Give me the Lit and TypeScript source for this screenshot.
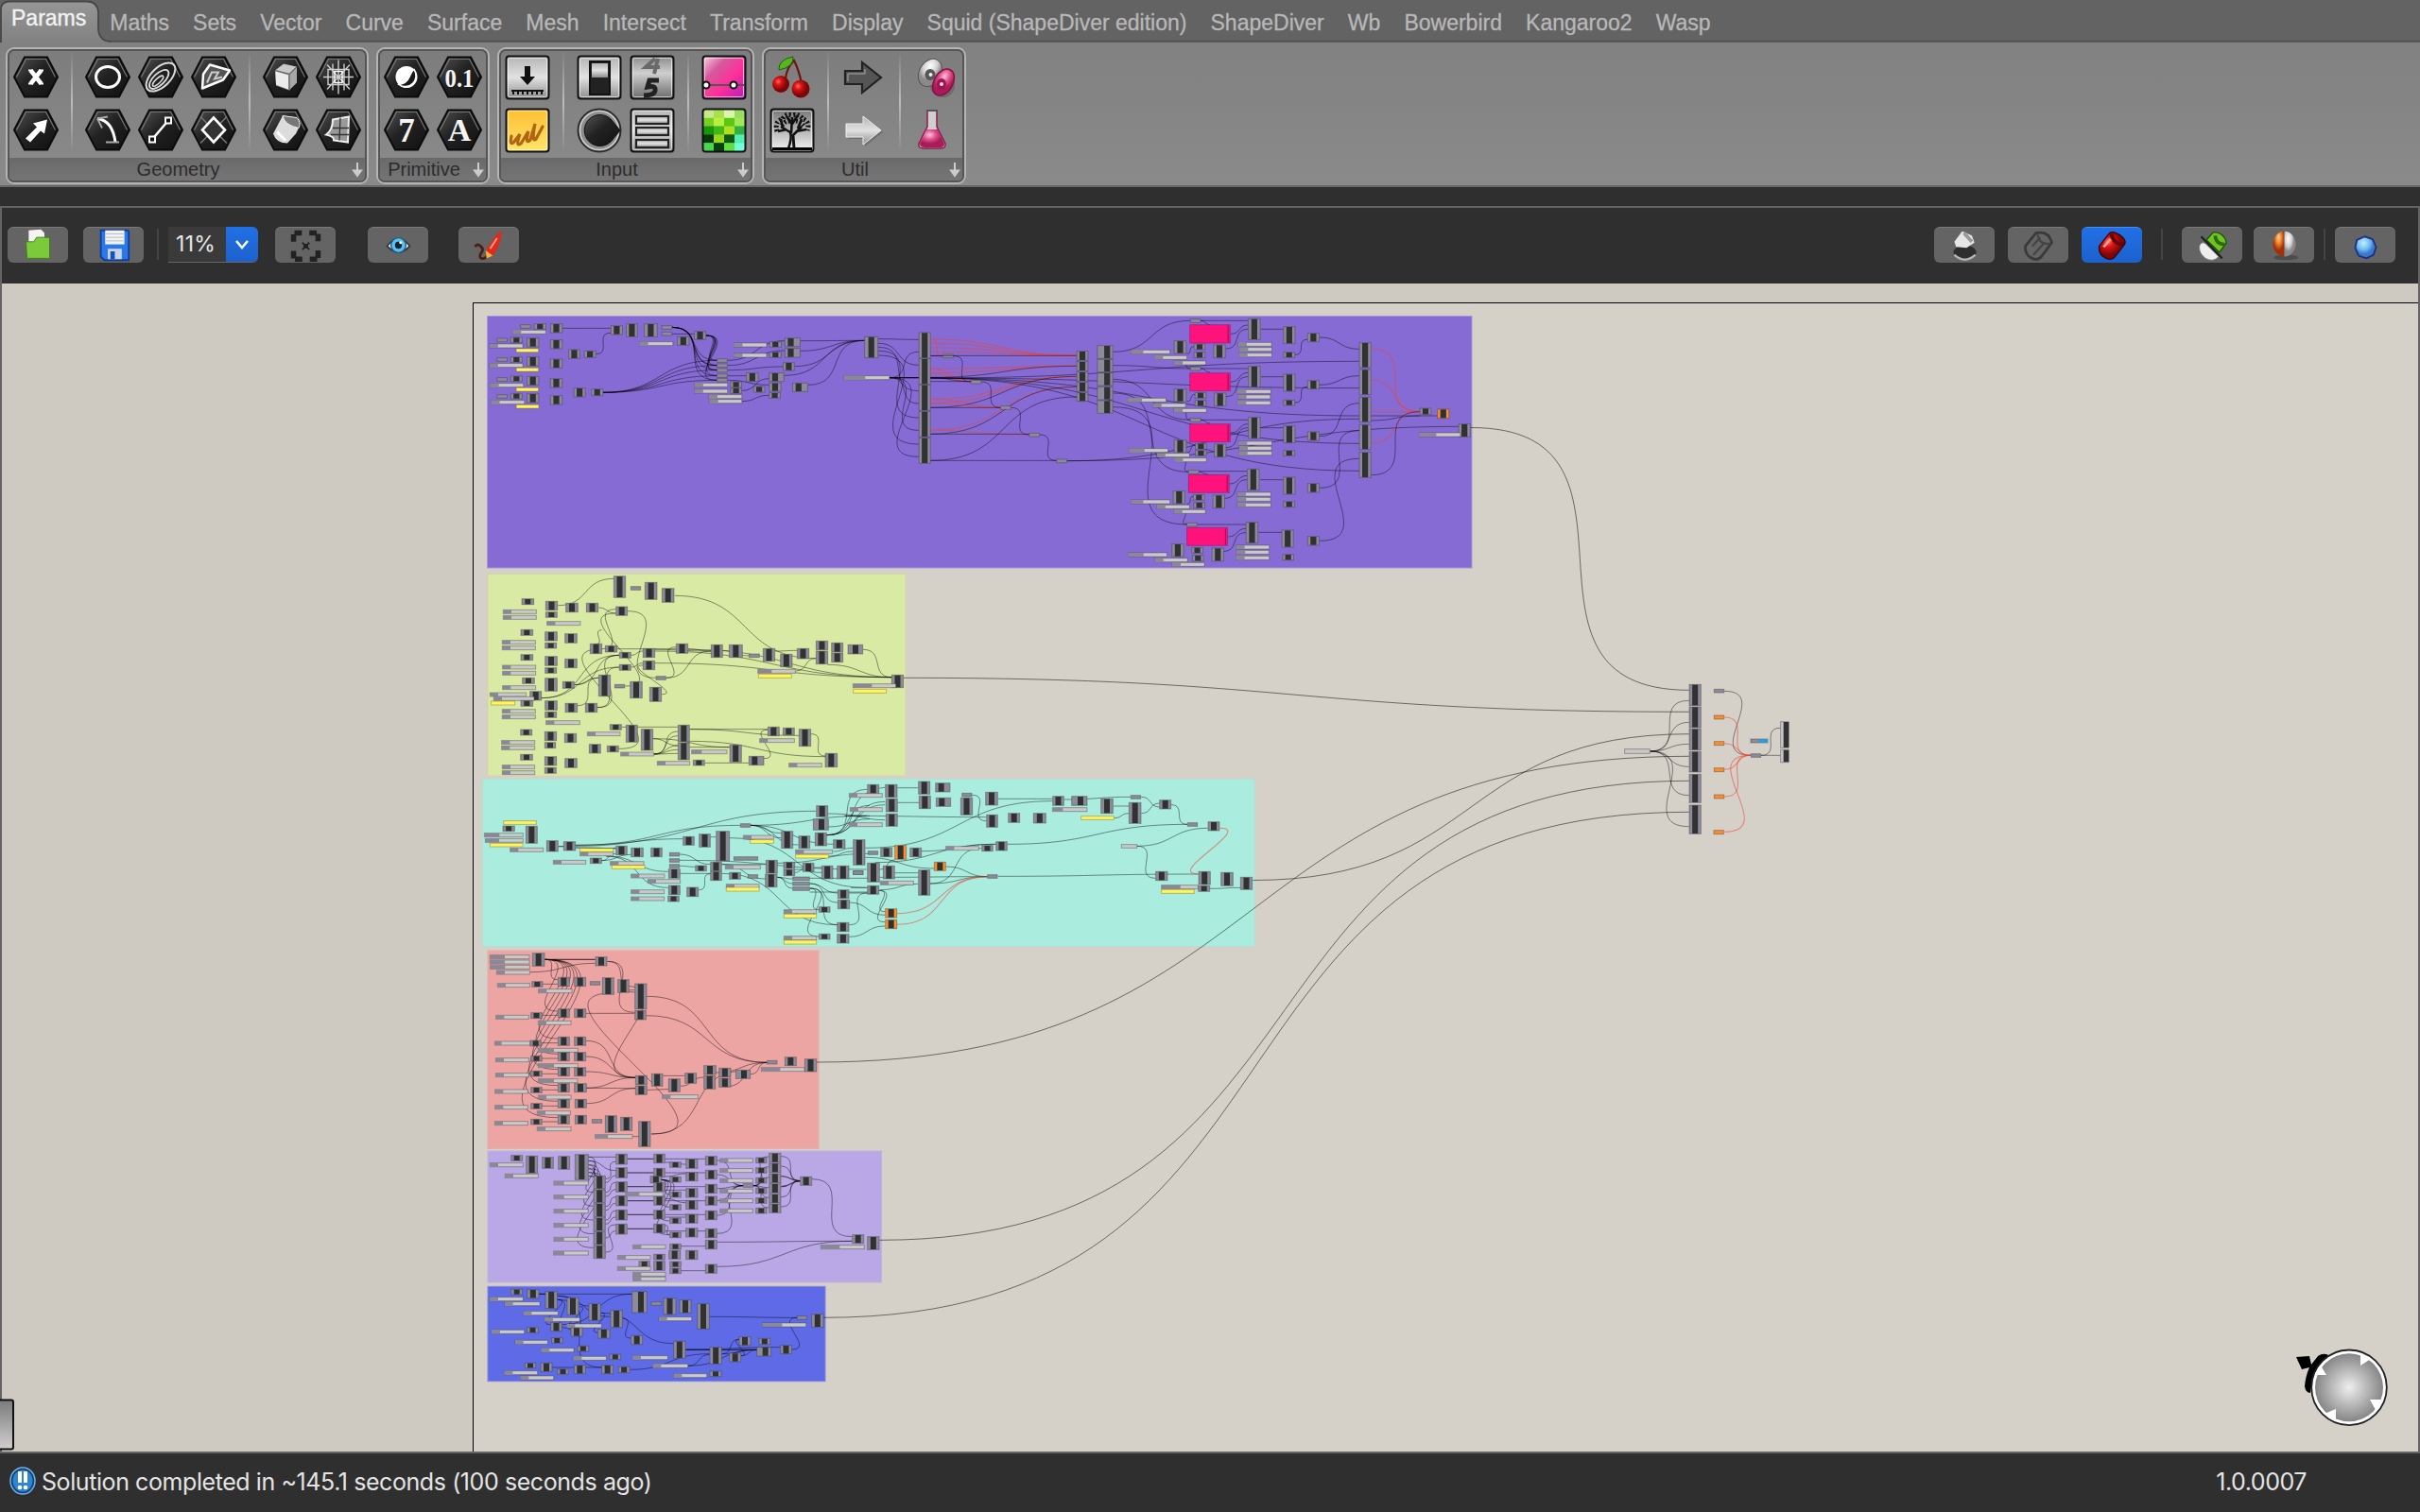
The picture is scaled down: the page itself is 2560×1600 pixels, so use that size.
import { LitElement, html, svg, css } from "lit";
import { customElement, property } from "lit/decorators.js";

/* ---------- canvas model ----------
   Node rows, in the local units of their frame:
   B x y w h [core]  component, core = offset of the dark label strip
   O x y w h         component with a warning (orange)
   P x y [w h]       floating parameter
   Q x y [w h]       orange parameter
   S x y [w head]    number slider
   Y x y w h         panel
   K x y w h         cluster
   T x y w h         boolean toggle
   L x y w h         plain light box
   W x1 y1 x2 y2     wire,  R = red wire, H = heavy wire */
interface Frame { ox: number; oy: number; sx: number; sy: number; rows: string; }

const u = 1 / 3;
const v = 1 / 2.9037;

const frames: Frame[] = [
  { ox: 500, oy: 320, sx: v, sy: u, rows: `
W 276 82 424 82;W 378 164 424 97;W 612 100 680 100;W 612 79 750 184;H 612 79 750 200;W 612 79 750 215;W 612 79 750 233;W 612 79 750 247
W 717 105 750 184;W 717 105 750 200;H 717 105 750 215;W 717 105 750 232;W 717 105 750 247
W 400 286 750 184;W 400 286 750 200;W 400 286 750 215;W 400 286 750 233;W 400 286 750 247
W 783 184 958 122;W 783 200 958 153;W 783 215 953 204;W 783 233 840 233;W 783 247 910 262;W 827 280 910 242;W 827 314 910 295
W 1006 122 1203 121;W 1006 154 1203 121;W 989 203 1203 121;W 957 232 1203 121;W 1030 262 1203 121
W 1246 116 1370 118;W 1246 130 1370 199;W 1246 142 1370 281;W 1246 154 1370 366;W 1246 168 1370 450
H 1281 239 1407 239;W 1281 239 1370 157;H 1281 239 1370 239;W 1281 239 1370 321;W 1281 239 1370 406;W 1281 239 1370 490
R 1407 117 1444 170;W 1407 170 1444 170;W 1477 170 1530 252
P 146 70;B 188 67 38 19;S 122 87 104;B 238 67 38 30
P 74 113;B 116 110 37 19;S 51 131 104;B 166 112 38 30;Y 133 146 70 13;B 238 118 38 30
P 74 175;B 116 172 37 19;S 51 193 104;B 166 172 38 31;Y 133 207 70 13;B 238 179 38 30
P 74 238;B 116 233 37 19;S 53 256 104;B 166 234 38 30;Y 133 270 70 13;B 238 241 38 30
P 74 292;B 116 288 37 19;S 56 310 104;B 166 289 38 30;Y 133 324 71 13;B 238 295 38 30
B 294 149 36 30;B 342 153 37 23;B 424 73 37 30;B 471 67 36 43;B 526 67 42 43;P 580 73;P 580 93;S 512 124 104;B 628 108 38 29;B 680 91 37 28
B 310 271 37 30;B 364 274 37 23
P 750 178;P 750 194;P 750 209;P 750 226;P 750 240
S 681 255 103;B 791 251 36 20;S 681 275 103;B 791 271 36 19;B 862 266 36 20;S 725 292 103;S 727 307 101
S 802 128 102;S 802 161 102;B 911 124 38 19;B 911 157 38 19;B 958 112 49 29 10;B 958 145 49 30 10;B 953 190 36 27;B 840 223 38 29
B 910 223 47 29 10;B 910 255 38 28;B 910 286 36 19;B 982 255 48 29 10
S 1140 232 141 65;B 1203 108 43 69;B 1370 95 37 83;B 1370 178 37 83;B 1370 261 37 83;B 1370 345 37 83;B 1370 429 37 83;P 1444 164` },

  { ox: 1030, oy: 320, sx: v, sy: u, rows: `
R -132 117 316 169;R -132 130 316 169;R -132 143 316 169;R -132 157 316 169;W -132 169 316 169
R -132 211 316 202;R -132 211 -9 252;R -132 225 316 202;R -132 225 -9 252;W -132 238 316 202;W -132 251 -9 251
R -132 307 316 235;R -132 307 82 334;R -132 320 316 235;W -132 334 316 235;R -132 320 82 334;W -132 334 82 334
R -132 406 316 268;R -132 406 170 420;W -132 418 316 268;W -132 418 170 418;W -132 502 316 300;W -132 502 254 502
W -132 239 -9 251;W 24 252 82 334;W 115 334 170 420;W 203 420 254 502
W -132 240 1184 187;W -132 240 1184 272;W -132 240 1184 360;W -132 240 1184 448;W -132 240 1184 535
W 287 503 1184 370;W 287 503 1490 394
W 428 157 665 58;W 428 200 665 210;W 428 244 665 373;W 428 288 660 538;W 428 332 655 705
W 697 58 843 58;W 697 58 727 71;W 697 210 843 210;W 697 210 727 222;W 697 373 843 373;W 697 373 727 384;W 692 536 840 536;W 692 538 722 547;W 687 705 836 705
W 790 100 843 72;W 774 147 843 85;W 790 252 843 223;W 774 299 843 236;W 790 414 843 386;W 774 461 843 398;W 786 576 840 550;W 770 622 840 563;W 782 744 836 718;W 767 790 836 731
W 882 85 951 85;W 882 236 951 236;W 882 398 951 398;W 880 563 951 563;W 875 730 946 730
W 987 166 1025 118;W 987 318 1025 268
W 655 163 676 140;W 655 315 680 292;W 655 476 680 453;W 655 640 676 615
W 640 191 665 210;W 640 341 665 373;W 640 499 660 538;W 640 663 655 705
W 1062 111 1184 148;W 1062 262 1184 233;W 1062 425 1184 320;W 1062 589 1184 407;W 1062 757 1184 496
W 1220 375 1370 360;W 1220 360 1424 360
R 1220 148 1370 347;R 1220 247 1370 347;R 1220 347 1370 347;R 1220 447 1370 347;W 1220 548 1370 347
P -9 246;P 82 328;P 170 414;P 254 497
B 316 154 36 31;B 316 187 36 31;B 316 220 36 31;B 316 253 36 31;B 316 286 36 29
B 379 136 49 43 22;B 379 180 49 42 22;B 379 223 49 42 22;B 379 267 49 43 22;B 379 311 49 42 22
P 665 52;K 663 70 126 60;B 615 121 39 42;B 676 131 36 20;B 676 157 36 20;B 736 134 38 43;S 483 150 121 37;S 555 168 101;S 615 185 99;B 843 51 38 68;S 812 126 104;S 816 142 101;S 814 160 103;B 951 76 37 56;B 951 157 36 19;B 1025 97 37 29
P 665 204;K 663 223 126 59;B 615 274 39 42;B 679 285 36 20;B 679 310 36 20;B 738 287 38 43;S 471 303 121 45;S 550 320 102;S 615 336 101;B 843 202 38 68;S 810 276 104;S 811 293 101;S 810 312 103;B 951 227 37 56;B 951 309 36 19;B 1025 247 37 29
P 665 367;K 663 385 126 59;B 615 436 39 42;B 680 447 36 20;B 680 469 36 19;B 738 449 38 43;S 477 463 121 47;S 562 478 102;S 616 493 100;B 843 364 38 69;S 813 440 104;S 815 456 101;S 814 472 103;B 951 391 37 56;B 951 469 36 19;B 1025 410 37 29
P 659 532;K 659 546 127 59;B 612 598 38 42;B 674 609 36 20;B 675 634 36 20;B 734 611 38 43;S 483 626 121 37;S 562 642 102;S 614 657 99;B 840 528 38 69;S 809 602 105;S 810 618 103;S 809 636 105;B 951 554 37 56;B 951 631 36 20;B 1025 574 37 30
P 654 699;K 654 714 127 59;B 608 766 38 42;B 669 777 36 20;B 671 802 36 20;B 731 779 38 43;S 474 794 121 47;S 556 811 102;S 609 825 101;B 836 697 38 68;S 805 770 104;S 807 786 101;S 805 804 104;B 946 722 37 56;B 948 799 36 20;B 1025 742 37 30
B 1184 127 37 81;B 1184 212 37 82;B 1184 300 37 81;B 1184 387 37 81;B 1184 475 37 82
B 1370 335 36 22;O 1424 338 37 31;B 1489 385 37 43;S 1368 413 128 52` },

  { ox: 500, oy: 600, sx: u, sy: u, rows: `
W 271 122 447 37;W 399 129 454 147;W 641 91 1090 290;W 492 140 581 352;W 410 260 454 134;W 483 378 454 147;W 390 245 410 200
W 323 374 465 280;W 218 416 465 280;W 218 416 465 318;W 323 374 399 352;W 333 440 399 352
W 395 446 465 318;W 395 446 465 280;W 458 260 645 260;W 503 280 540 267;W 503 318 540 305
W 579 262 756 267;W 684 260 756 267;W 793 265 878 282;W 614 352 645 254;W 614 352 756 267;W 601 404 540 312
W 579 267 1330 350;W 579 305 1330 350;W 684 262 1330 350;W 960 267 1030 265;W 1025 330 1090 290;W 1127 310 1330 350;W 1239 262 1330 350
W 464 577 410 260;W 474 508 652 508;W 573 545 652 567;W 573 545 815 572;W 575 594 652 567;W 575 594 652 522;W 575 594 652 536;W 575 594 652 580;W 575 594 652 592
W 689 515 936 515;W 689 515 1035 535;W 689 553 1120 602;W 689 572 815 572;W 737 622 876 622;W 924 608 936 517;W 1074 530 1120 600
B 447 28 39 70;P 501 61;B 546 48 40 56;B 600 67 40 46
B 155 100 40 20;B 231 108 39 30;B 231 142 38 19;B 295 114 40 30;B 360 114 39 30;B 454 125 38 30;S 96 135 107;S 96 153 107;S 235 172 108
B 152 198 40 20;B 229 205 40 30;B 229 240 38 19;B 292 211 40 31;S 93 232 107;S 93 250 107
B 152 277 40 20;B 229 283 40 31;B 229 319 38 19;B 292 291 40 30;S 94 311 107;S 94 330 107
B 157 351 40 20;B 229 352 40 43;B 285 363 38 23;S 94 376 107;B 181 394 38 30;S 54 398 117;S 66 411 130;Y 58 425 77 14;B 152 423 40 20
B 229 424 40 31;B 229 459 38 20;B 293 432 40 30;B 357 432 39 30;S 93 451 107;S 93 469 107;S 232 487 109
B 151 515 38 20;B 228 522 39 30;B 228 556 36 20;B 291 528 39 30;S 91 550 107;S 91 567 107
B 151 594 40 20;B 228 601 39 30;B 228 636 38 20;B 292 607 40 31;S 93 628 105;S 93 646 105
B 372 243 39 33;B 420 249 39 22;B 465 270 38 20;B 465 309 38 20;B 540 258 39 30;B 540 297 39 30;B 645 243 39 32;B 399 342 39 69;P 450 372;P 581 346;B 499 363 40 54;B 561 381 39 47
B 756 246 38 42;B 813 246 44 42;P 876 275 35 13;B 921 258 39 42;B 976 276 39 42;B 1029 258 39 34;B 1089 234 39 30;B 1089 266 39 43;B 1138 240 38 31;B 1138 272 38 31;B 1190 246 49 31 16
S 904 324 121 44;Y 906 339 107 14;B 1329 342 39 42;S 1206 370 138 60;Y 1207 387 107 14
B 435 499 38 19;B 486 501 38 56;B 534 514 39 69;S 363 523 106;B 369 562 38 30;B 426 567 38 21;S 469 587 106
B 651 501 38 55;B 651 557 38 56;S 694 580 114 32;S 585 616 105;B 699 612 38 19;B 815 564 39 56;B 876 600 49 30 10;B 936 507 38 30;B 984 510 38 24;S 910 544 112;B 1035 514 39 56;B 1118 591 40 45;S 1003 622 106` },

  { ox: 500, oy: 820, sx: u, sy: u, rows: `
H 272 227 289 227;W 326 223 849 160;W 326 223 1090 115;W 326 226 667 203;H 326 231 454 233;W 409 272 454 250;W 409 272 503 253
W 423 258 620 307;W 423 258 620 358;W 657 252 755 284;W 657 271 1250 300;W 657 313 755 313;W 718 365 755 314;W 815 200 1250 358;W 657 289 706 292
W 755 197 772 197;W 790 313 1157 476;W 790 284 930 284;W 790 284 930 330
W 882 160 979 200;W 882 160 1034 222;W 882 160 1145 220;W 882 160 1250 130;W 882 160 979 185
W 1124 191 1252 46;W 1124 191 1260 97;W 1124 191 1290 50
W 1128 123 1260 130;W 1128 165 1260 140
W 967 325 1015 330;W 967 325 1015 345;W 967 325 1015 360;W 967 280 1260 250;W 1070 328 1260 328;W 1070 345 1158 375;W 1070 345 1158 405;W 1070 360 1100 428;W 1070 360 1158 476;W 1070 360 1100 513
W 1070 372 1260 372;W 1195 375 1260 375;W 1195 476 1252 375;W 1195 405 1308 445;W 1195 514 1308 480;W 1022 310 1060 294;W 1084 294 1107 294;W 1022 300 1107 310
W 1144 243 1207 232;W 1130 258 1207 243
Y 97 145 106 13;B 95 161 39 19;B 168 162 38 56;S 36 184 125 48;S 39 201 122 44;Y 54 216 106 13;S 118 231 107;B 234 208 38 36;B 288 211 39 30
S 255 270 105;S 340 244 107;Y 340 232 107 13;B 372 263 38 19;B 454 225 37 30;B 502 231 40 30;B 565 231 37 30;S 436 274 108;Y 441 286 106 13
P 624 246;P 624 265;P 624 283;B 621 298 38 31;S 502 314 108;S 555 331 105;B 621 350 38 31;S 502 364 107;S 502 386 107;B 619 384 37 19;B 679 356 38 31
B 667 195 37 29;B 718 187 37 43;B 772 178 44 96;B 706 287 37 19;B 754 276 37 30;B 754 306 37 30;P 849 154;S 858 191 98;Y 880 205 76 13;P 828 259 78 13;S 801 286 113;B 814 309 37 23;P 873 316;S 804 346 106;Y 804 356 106 14
B 979 178 38 56;B 1034 193 37 41;B 1086 183 38 43;B 1144 205 39 29;B 1090 97 38 37;B 1080 139 50 37 18;S 1024 237 119;Y 1024 252 106 13
B 930 270 38 43;B 928 314 39 43;B 986 276 37 22;B 986 299 37 22;B 1047 279 37 29;B 1107 288 37 43;B 1156 288 39 43;P 1207 304;P 1015 323 55 13;P 1015 339 55 13;P 1015 355 55 13
B 1158 364 37 29;B 1158 396 39 30;B 1098 418 37 19;S 987 427 105;Y 987 441 105 14;B 1156 468 39 30;B 1098 504 37 19;B 1156 505 39 30;S 987 511 105;Y 987 524 105 14` },

  { ox: 900, oy: 820, sx: u, sy: u, rows: `
W 90 42 109 40;W 148 41 214 41;W 148 88 216 88;W -20 130 430 134;W -76 191 109 85;W -76 191 109 95;W -20 130 109 143;W 385 64 430 146;W 467 76 640 76
W 46 232 640 83;W 224 242 460 220;W 77 278 460 220;W 252 345 415 233;W 498 220 1068 157;W 46 262 264 297;W 92 300 140 270
W 678 78 888 70;W 834 99 882 99;W 836 137 882 122;W 922 70 980 102;W 922 122 980 90;W 1017 95 1068 157;W 908 226 1133 169;W 908 226 968 328
W 92 325 433 323;W 140 311 214 311;W 92 365 214 346;W 252 345 433 323;W 302 291 433 323;W 467 322 1103 315;W 1140 361 1237 358
R 1172 169 1103 314;R 147 440 433 323;R 147 475 433 323;W 90 367 109 434;W 90 367 109 467;W 0 358 52 358
B 52 30 38 30;B 109 30 39 42;B 111 75 38 43;B 111 123 38 41;S -6 58 107;S -3 103 104;S -6 151 107;B 214 20 38 42;B 216 66 38 42;B 268 25 48 30 10;B 270 72 48 29 10
P 352 57;B 348 72 39 56;B 427 54 40 43;B 430 126 37 41;B 499 121 38 31;B 579 121 41 33;B 640 67 37 31;B 700 67 51 31 20;S 639 103 112 33;Y 730 130 106 13;B 793 75 40 48;B 882 87 40 68;P 888 64;B 979 79 38 30;P 1068 151;B 1133 148 38 30
B 7 205 39 82;P 54 241;B 94 231 38 30;O 139 223 38 46;B 187 231 38 30;S 301 226 106;B 415 223 37 20;B 460 211 37 30;O 264 276 38 29;B 52 279 40 62;B 102 288 38 43;S 93 336 107;B 52 351 38 29;B 214 301 38 82;P 433 316;P 7 304;O 109 424 38 30;O 109 459 38 30
L 858 220 51 13;B 967 306 39 30;B 1103 306 39 43;S 985 349 118 60;B 1102 351 38 20;Y 985 363 106 14;B 1174 309 40 44;B 1236 324 39 41` },

  { ox: 500, oy: 1000, sx: u, sy: u, rows: `
H 230 46 389 46;W 183 86 389 58;W 230 46 270 110;W 230 46 270 210;W 230 46 270 297;W 230 46 270 346;W 230 46 270 395;W 230 46 270 446;W 230 46 270 496;W 230 46 270 548
W 223 124 270 124;W 223 223 270 223;W 218 311 270 311;W 221 360 270 360;W 221 409 270 409;W 221 460 270 460;W 221 511 270 511;W 221 561 270 561
W 428 52 514 214;W 428 52 514 150;W 497 143 514 143;W 360 217 514 217;W 480 130 516 421;W 567 600 450 152
W 360 304 516 421;W 360 354 516 421;W 360 402 516 421;W 360 454 516 421;W 360 454 516 455;W 362 503 516 455;W 508 608 527 608
W 553 163 934 373;W 551 224 934 373;W 567 600 860 400;W 555 460 621 458;W 604 415 673 415;W 659 448 733 420;W 771 405 934 373;W 800 450 934 373;W 882 410 934 373
S 54 31 127 47;S 54 47 127 47;S 55 63 127 47;S 75 80 107;B 189 25 40 43;B 389 37 38 30
S 78 121 104;B 187 115 36 19;B 270 102 38 30;B 322 102 38 30;S 208 139 108;P 372 115;B 411 103 38 55;B 460 109 37 43;B 514 122 39 82;B 514 207 37 31
S 73 222 106;B 184 214 37 20;B 270 202 38 29;B 322 202 38 29;S 207 240 106
S 69 305 114 22;B 182 302 36 20;B 270 291 38 29;B 322 291 38 29;S 207 327 128 50
S 72 358 107;B 184 351 37 19;B 270 340 38 29;B 322 340 38 29;S 207 376 128 50
S 72 406 107;B 184 399 37 19;B 270 388 38 29;B 322 388 38 29;S 207 424 127 50
S 70 458 106;B 184 451 37 19;B 270 439 38 29;B 322 439 40 29;S 207 476 106
S 70 508 106;B 184 502 37 19;B 270 489 38 29;B 324 489 38 29;S 204 526 107
S 69 559 107;B 184 552 37 19;B 270 540 38 29;B 324 540 38 29;S 204 577 109
P 378 553;B 420 541 38 55;B 469 546 38 44;S 388 601 120 40;B 526 559 39 82
B 516 414 38 30;B 516 446 38 30;B 567 408 37 41;B 621 424 38 43;S 601 475 115;B 673 406 38 34;B 733 382 40 30;B 733 414 38 44;B 781 390 39 30;B 781 422 39 30;B 834 396 48 29 18
P 934 366;B 990 355 38 29;S 915 388 139 60;B 1053 361 39 42` },

  { ox: 500, oy: 1210, sx: u, sy: u, rows: `
W 368 43 454 43;W 368 55 454 86;W 368 68 405 110;W 368 80 405 110;W 368 92 405 110;W 368 104 405 110;W 368 43 405 105
W 368 55 383 155;W 368 68 383 199;W 368 80 383 243;W 368 92 383 287;W 368 104 383 331
W 421 112 454 58;W 421 124 454 102;W 421 168 454 146;W 421 212 454 190;W 421 256 454 234;W 421 300 454 278;W 421 345 454 258;W 421 155 454 124;W 421 200 454 170;W 421 243 454 214
H 491 49 574 49;H 491 93 574 93;H 491 137 574 137;H 491 182 574 182;H 491 226 574 226;H 491 271 574 271
W 611 49 738 49;W 611 93 738 93;W 611 137 738 137;W 611 182 738 182;W 611 226 738 226;W 611 278 738 278;W 611 60 676 66;W 611 105 676 96;W 611 148 676 148;W 611 175 676 188;W 611 234 676 234;W 611 260 625 290
W 598 115 625 162;W 598 115 625 202;W 598 115 625 246;W 598 115 625 290;H 598 115 625 120
W 776 54 858 134;W 776 99 858 134;W 776 143 858 134;W 776 182 858 134;W 776 228 858 134;W 776 286 858 134
W 890 134 940 42;W 890 134 940 74;W 890 134 940 108;W 890 134 940 140;W 890 134 940 172;W 890 134 940 204
W 979 41 1039 119;W 979 72 1039 119;H 979 104 1039 119;H 979 137 1039 119;W 979 170 1039 119;W 979 201 1039 119
W 1076 113 1204 296;W 776 313 1204 310;W 776 391 1204 310;W 662 326 738 326;W 662 404 738 404
B 121 37 38 19;S 54 61 107;B 169 39 38 56;S 102 96 107;B 220 43 37 37;B 271 40 38 43;B 324 34 44 82
S 257 119 111 32;S 257 163 111 32;S 257 208 111 32;S 257 253 111 32;S 257 297 111 32;S 256 341 112 34
B 383 102 39 43;B 383 146 39 43;B 383 190 39 44;B 383 235 39 43;B 383 279 39 43;B 383 323 39 43
B 454 33 37 34;B 454 76 37 34;B 454 121 37 34;B 454 165 37 34;B 454 210 37 34;B 454 255 37 34
B 574 33 37 30;B 574 78 37 30;B 563 103 37 23;B 574 123 37 30;B 574 167 37 30;B 574 211 37 30;B 574 255 37 30;S 484 154 121 44
B 625 58 37 19;B 625 105 37 19;B 625 153 37 19;B 625 193 37 19;B 625 236 37 19;B 625 281 37 19
B 676 49 39 31;B 676 91 39 29;B 676 142 39 30;B 676 180 39 30;B 676 224 39 30;B 676 268 39 30
B 738 40 38 30;B 738 84 38 30;B 738 129 38 30;B 738 167 38 30;B 738 213 38 30;B 738 270 38 30;B 738 306 38 30;B 738 383 38 30
S 784 47 106;S 784 79 106;S 784 111 106;S 784 144 106;S 784 175 106;S 784 207 106
B 898 44 36 19;B 898 76 36 19;B 898 108 36 19;B 898 141 36 19;B 898 172 36 19;B 898 204 36 19;P 858 127
B 940 30 39 31;B 940 62 39 31;B 940 95 39 31;B 940 127 39 31;B 940 160 39 30;B 940 191 39 30;B 1039 105 38 29;B 1204 289 38 29;B 1252 295 39 43;S 1104 322 140 60
S 508 321 105;B 625 318 37 19;B 622 339 38 29;B 676 339 39 30;S 459 355 106;B 574 351 37 19;B 527 373 36 19;S 459 390 106;B 574 373 37 31;B 625 374 37 19;B 625 395 37 19;S 508 408 105;S 508 423 105` },

  { ox: 500, oy: 1210, sx: u, sy: u, rows: `
H 211 478 231 478;W 211 478 505 478;W 269 484 369 516;W 269 496 299 586;W 269 496 247 575;W 337 518 313 590;W 269 484 437 550;W 407 538 397 600;W 284 575 505 478;W 407 538 637 635
W 476 556 502 618;W 269 496 411 711;W 253 711 411 711;W 500 718 752 668;W 684 706 902 655;W 684 706 752 670;W 752 550 1030 553;W 676 654 976 647;H 676 655 902 655
W 791 668 846 622;W 791 668 902 655;W 852 674 846 622;W 852 674 902 655;W 1013 654 1030 553
B 121 462 38 19;B 172 463 39 29;S 54 487 107;S 101 502 113;B 230 469 39 56;S 160 532 112;B 299 489 38 56;S 228 552 113;B 368 508 39 55;S 298 572 112;B 247 568 37 29;B 311 584 38 29;B 397 589 39 30;B 437 529 39 56;B 502 609 38 30
S 60 591 105;B 172 583 37 19;S 134 624 105;B 250 616 36 19;S 217 649 105;B 332 642 37 19;S 319 675 106;B 434 668 37 19;B 505 469 49 69 20;P 566 502;B 605 490 41 54;B 656 496 38 43;S 590 550 106;B 712 508 40 82;P 1029 547;B 1075 541 39 43;S 919 569 140 62
S 507 673 113;S 571 699 113;B 637 627 39 56;B 752 646 39 55;B 814 665 38 29;B 845 613 38 29;B 908 618 37 21;B 901 646 47 30 19;B 976 640 37 29;S 637 730 107;B 752 722 38 19
B 165 696 36 18;B 215 696 38 29;S 100 721 107;B 268 715 37 19;S 151 737 107;B 321 703 38 29;B 409 703 38 29;B 462 708 37 21` },

  { ox: 1690, oy: 700, sx: u, sy: u, rows: `
W 167 285 290 124;W 167 285 290 193;W 167 285 290 262;W 167 285 290 334;W 167 285 290 425;W 167 285 290 524
W 402 94 486 298;R 402 177 486 298;R 402 260 486 298;R 402 343 486 298;R 402 429 486 298;R 402 541 486 298;W 519 298 580 211;W 519 298 580 298
L 85 277 82 16;B 290 72 39 69;B 290 143 39 68;B 290 213 39 69;B 290 285 39 67;B 290 357 39 92;B 290 455 39 93
P 369 87;Q 369 170;Q 369 253;Q 369 337;Q 369 422;Q 368 535;T 485 245 56 14;P 486 292
E 580 190 27 85;E 580 279 27 42` },
];

const groups = [
  { x: 515.5, y: 334.5, w: 1041.5, h: 266.5, fill: "#866bd4", edge: "#a797dc" },
  { x: 516, y: 607.5, w: 442, h: 213.5, fill: "#d9eaa5", edge: "#cdd8ae" },
  { x: 510.5, y: 824.5, w: 816.5, h: 177, fill: "#aaecde", edge: "#b2e0d5" },
  { x: 516, y: 1006, w: 350, h: 209.5, fill: "#eda5a4", edge: "#e0aeab" },
  { x: 516, y: 1218, w: 416.5, h: 139, fill: "#baa7e6", edge: "#c0b3dd" },
  { x: 516, y: 1361.3, w: 357, h: 100.4, fill: "#5e6ae6", edge: "#8288de" },
];

const trunks = [
  [1556, 452.5, 1786.7, 730.3],
  [956, 717.3, 1786.7, 753.3],
  [1325.3, 931.5, 1786.7, 776.7],
  [864, 1124, 1786.7, 800.3],
  [930.7, 1312.3, 1786.7, 826.3],
  [871.3, 1394.3, 1786.7, 859.3],
];

/* Handles grow with the steepness of the wire, so that vertical runs bow outwards. */
function curve(x1: number, y1: number, x2: number, y2: number): string {
  const h = Math.hypot(x2 - x1, y2 - y1);
  const steep = Math.pow(Math.abs(y2 - y1) / h, 4);
  const d = h * (0.5 + 0.25 * steep);
  return `M${x1} ${y1}C${x1 + d} ${y1} ${x2 - d} ${y2} ${x2} ${y2}`;
}

function item(row: string) {
  const [kind, ...rest] = row.trim().split(/\s+/);
  const [x, y, a, b, c] = rest.map(Number);
  const box = (w: number, h: number, cls: string) =>
    svg`<rect class=${cls} x=${x + 1} y=${y + 1} width=${w - 2} height=${h - 2}></rect>`;
  switch (kind) {
    case "W": return svg`<path class="wire" d=${curve(x, y, a, b)}></path>`;
    case "H": return svg`<path class="wire heavy" d=${curve(x, y, a, b)}></path>`;
    case "R": return svg`<path class="wire red" d=${curve(x, y, a, b)}></path>`;
    case "B":
    case "O":
      return svg`${box(a, b, kind === "O" ? "warn" : "body")}
        <rect class="core" x=${x + (c || (a - 18) / 2)} y=${y + 2} width="18" height=${b - 4}></rect>`;
    case "E":
      return svg`${box(a, b, "light")}<rect class="core" x=${x + 10} y=${y + 2} width="17" height=${b - 4}></rect>`;
    case "P": return box(a || 33, b || 13, "body");
    case "Q": return box(a || 33, b || 14, "warn");
    case "Y": return box(a, b, "panel");
    case "L": return box(a, b, "light");
    case "T": return svg`${box(a, b, "body")}<rect class="blue" x=${x + 28} y=${y + 1} width=${a - 29} height=${b - 2}></rect>`;
    case "K": return svg`${box(a, b, "cluster")}<rect class="spine" x=${x + a - 9} y=${y + 4} width="3" height=${b - 8}></rect>`;
    default: {
      const w = a || 105;
      return svg`${box(w, 14, "light")}<rect class="head" x=${x + 1} y=${y + 1} width=${b || 26} height="12"></rect>`;
    }
  }
}

/* ---------- icons ---------- */
const hex = (inner: unknown) => svg`
  <polygon points="12,2.500 36,2.500 47,23.500 36,44.500 12,44.500 1,23.500" fill="url(#hexFill)" stroke="#0b0b0b" stroke-width="2"></polygon>
  <polyline points="3.500,23.500 13.500,4.500 34.500,4.500 44.500,23.500" fill="none" stroke="#777" stroke-width="1.200"></polyline><g transform="translate(0 -.5)">${inner}</g>`;
const tile = (fill: string, inner: unknown) => svg`
  <rect x="1.500" y="1.500" width="45" height="45" rx="3" fill=${fill} stroke="#111" stroke-width="2"></rect>
  <rect x="3.500" y="3.500" width="41" height="41" rx="2" fill="none" stroke="#fff" stroke-opacity=".6"></rect>${inner}`;

const icons: Record<string, unknown> = {
  cross: hex(svg`<path d="M18.500 17L29.500 31M29.500 17L18.500 31" stroke="#fff" stroke-width="4.600"></path><path d="M16 17H21M27 17H32M16 31H21M27 31H32" stroke="#fff" stroke-width="2"></path>`),
  vec: hex(svg`<path d="M13 33L25 21L21 17L36 13L33 28L29 25L18 37Z" fill="#fff"></path>`),
  circle: hex(svg`<ellipse cx="24" cy="24" rx="12.500" ry="11" fill="none" stroke="#fff" stroke-width="3"></ellipse>`),
  ellipse: hex(svg`<g fill="none" stroke="#dcdcdc" transform="rotate(-44 24 24)"><ellipse cx="24" cy="24" rx="19" ry="10" stroke-width="2"></ellipse><ellipse cx="21" cy="24.500" rx="13" ry="6" stroke-width="1.800"></ellipse><ellipse cx="19" cy="25" rx="7.500" ry="2.500" stroke-width="1.500"></ellipse></g>`),
  plane: hex(svg`<path d="M20 11L41 17L34 27L12 36L13 21Z" fill="#555" stroke="#fff" stroke-width="2.500" stroke-linejoin="round"></path><path d="M17 30L22 19L29 19L25 26L33 24" fill="none" stroke="#ccc" stroke-width="2"></path>`),
  box: hex(svg`<path d="M13 17L22 10L36 13V30L28 38L14 33Z" fill="#a8a8a8"></path><path d="M13 17L28 21L36 13M28 21V38" stroke="#666" fill="none" stroke-width="1.300"></path><path d="M13.500 18L27 22V37L14 32Z" fill="#ececec"></path><path d="M14 16.500L22 10.500L35 13.300L28 20Z" fill="#c9c9c9"></path>`),
  mesh: hex(svg`<path d="M24 6V42M8 24H40M12 11L36 37M36 11L12 37M13 16H35V32H13ZM18 10V38M30 10V38" fill="none" stroke="#cfcfcf" stroke-width="1.400"></path><path d="M20 18H28V30H20Z" fill="none" stroke="#fff" stroke-width="1.500"></path>`),
  arc: hex(svg`<path d="M13 12Q29 14 32 37" fill="none" stroke="#fff" stroke-width="3"></path><path d="M13 12L18 22M13 12L24 10M22 37H36" stroke="#aaa" stroke-width="1.800"></path>`),
  line: hex(svg`<path d="M15 34L32 14" stroke="#fff" stroke-width="2.500"></path><path d="M12 31H18V37H12ZM29 11H35V17H29Z" fill="#111" stroke="#fff" stroke-width="2"></path>`),
  rect: hex(svg`<path d="M10 10L38 38M38 10L10 38" stroke="#777" stroke-width="1.500"></path><path d="M24 11L36 24L24 37L12 24Z" fill="#333" stroke="#fff" stroke-width="2.600"></path>`),
  brep: hex(svg`<path d="M21 9L36 11Q41 18 35 28L26 38Q14 38 11 28Z" fill="#dcdcdc"></path><path d="M21 9Q23 19 38 22Q41 16 36 11Z" fill="#777" stroke="#eee"></path><path d="M15 26L24 35" stroke="#fff" stroke-width="3"></path>`),
  surf: hex(svg`<path d="M18 13L35 10L34 37L19 35Q20 31 11 29Q18 24 18 13Z" fill="#999" stroke="#eee" stroke-width="2"></path><path d="M26 11L25 35M18 22H35M16 29L35 29" stroke="#333" stroke-width="1.300" fill="none"></path>`),
  bool: hex(svg`<circle cx="24" cy="24" r="11.500" fill="#fff"></circle><path d="M32 16A11.500 11.500 0 0 1 16 32Q24 31 27 24T32 16Z" fill="#181818" stroke="#fff" stroke-width="1.500"></path>`),
  num: hex(svg`<text x="24" y="34" class="gl" font-size="28" textLength="31" lengthAdjust="spacingAndGlyphs">0.1</text>`),
  int: hex(svg`<text x="24" y="36" class="gl" font-size="35">7</text>`),
  txt: hex(svg`<text x="24" y="35" class="gl" font-size="34">A</text>`),
  btn: tile("url(#silver)", svg`<path d="M21 12H27V23H32L24 32L16 23H21Z" fill="#111"></path><path d="M7 38H41M9 37V42M14 37V42M19 37V42M24 37V42M29 37V42M34 37V42M39 37V42" stroke="#111" stroke-width="2"></path>`),
  toggle: tile("url(#silver)", svg`<rect x="14" y="7" width="21" height="35" fill="#222" stroke="#111" stroke-width="2"></rect><rect x="16" y="9" width="17" height="15" fill="url(#silver)"></rect>`),
  scroller: tile("url(#drum)", svg`<path d="M27 4L17 13H32M30 4L26 20" fill="none" stroke="#6a6a6a" stroke-width="4"></path><path d="M31 27H21L19 34Q28 32 27 38Q26 43 15 43" fill="none" stroke="#222" stroke-width="5"></path>`),
  graph: tile("url(#pinkTile)", svg`<path d="M3 32H45" stroke="#555" stroke-width="2"></path><circle cx="5" cy="32" r="3.500" fill="#fff" stroke="#111" stroke-width="2"></circle><circle cx="34" cy="32" r="3.500" fill="#fff" stroke="#111" stroke-width="2"></circle>`),
  panel: tile("url(#gold)", svg`<path d="M7 30Q5 40 9 37L16 28Q11 42 17 38L25 25Q21 40 27 34L32 17Q28 38 33 33L40 20" fill="none" stroke="#b06414" stroke-width="3.200" stroke-linecap="round"></path>`),
  knob: svg`<circle cx="24" cy="24" r="22.500" fill="#8d8d8d" stroke="#2c2c2c" stroke-width="2"></circle><circle cx="24" cy="24" r="20.500" fill="none" stroke="#d0d0d0" stroke-width="1.500"></circle><path d="M46 24L37 13A16.500 16.500 0 1 0 37 35Z" fill="url(#hexFill)" stroke="#111"></path>`,
  list: tile("url(#silver)", svg`<g fill="url(#silver)" stroke="#222" stroke-width="2.200"><rect x="7" y="9" width="34" height="8"></rect><rect x="7" y="21" width="34" height="8"></rect><rect x="7" y="34" width="34" height="8"></rect></g>`),
  swatch: svg`<g>${["#c8e88c", "#a8e050", "#dcf4b0", "#98dc60", "#78d020", "#b8f040", "#58c810", "#a0e858", "#189808", "#40b818", "#b0e020", "#30b040", "#083808", "#98d818", "#105810", "#50f0b0", "#48d850", "#084010", "#60e040", "#70ffd8"].map((f, i) => svg`<rect x=${2 + (i % 4) * 11} y=${2 + Math.floor(i / 4) * 8.8} width="11.200" height="9" fill=${f}></rect>`)}</g><rect x="1.500" y="1.500" width="45" height="45" rx="3" fill="none" stroke="#111" stroke-width="2"></rect>`,
  cherry: svg`<path d="M17 25Q18 14 26 6Q31 16 34 30" fill="none" stroke="#6b1515" stroke-width="2.200"></path><path d="M10 16Q9 5 25 2Q26 13 10 16Z" fill="#54b51e" stroke="#255d0b"></path><circle cx="12" cy="31" r="9" fill="url(#red)"></circle><circle cx="33" cy="36" r="9.500" fill="url(#red)"></circle>`,
  tree: tile("url(#treeBg)", svg`<path d="M20 43Q24 32 22 26L12 20M24 30L34 20M23 27L24 10M28 25L39 23M18 23L9 25M14 21L12 12M30 22L34 12M24 18L18 9M24 17L30 8" fill="none" stroke="#111" stroke-width="2.600"></path><path d="M26 43L25 30" stroke="#111" stroke-width="3"></path><g fill="none" stroke="#111" stroke-width="5" stroke-dasharray="2 2.200"><path d="M8 25Q5 14 14 12Q16 6 24 8Q32 6 35 12Q43 14 40 24"></path><path d="M13 19Q18 12 24 15Q31 12 36 19"></path></g><path d="M3 42H45V45H3Z"></path>`),
  arrowDark: svg`<path d="M4 17H22V8L42 24L22 40V31H4Z" fill="#555" stroke="#222" stroke-width="2.200"></path><path d="M7 28V20H25V15" fill="none" stroke="#aaa"></path>`,
  arrowLight: svg`<path d="M7 19H25V11L44 26L25 41V33H7Z" fill="#555" opacity=".45"></path><path d="M5 17H23V9L42 24L23 39V31H5Z" fill="url(#silver)" stroke="#eee"></path>`,
  pills: svg`<ellipse cx="31" cy="33" rx="13" ry="12" fill="#444" opacity=".35"></ellipse><ellipse cx="18" cy="19" rx="11.500" ry="15.500" fill="url(#pearl)" stroke="#555" transform="rotate(30 18 19)"></ellipse><ellipse cx="18" cy="21" rx="5.500" ry="6" fill="#555"></ellipse><circle cx="18.500" cy="21" r="2" fill="#eee"></circle><ellipse cx="32" cy="29" rx="10" ry="15" fill="url(#rose)" stroke="#8a0f45" stroke-width="1.500" transform="rotate(30 32 29)"></ellipse><ellipse cx="30" cy="31" rx="5" ry="6" fill="#9c1552"></ellipse><circle cx="30" cy="31" r="2" fill="#ffd7e8"></circle>`,
  flask: svg`<path d="M15 3H25V20L34 38Q35 43 29 43H11Q5 43 6 38L15 20Z" fill="#cfcfcf" stroke="#8a1c4c" stroke-width="1.500"></path><path d="M14 23H26L33 38Q33 42 29 42H12Q7 42 7 38Z" fill="url(#rose)"></path><path d="M14 3H26" stroke="#555" stroke-width="2"></path>`,
  folder: svg`<path d="M12 5L26 4L30 8V22H12Z" fill="#f4f4f4"></path><path d="M9 18H18L21 13H36V37H10Z" fill="#7cc93c" stroke="#397f13"></path>`,
  save: svg`<path d="M8 5H38Q40 5 40 7V39H12L8 35Z" fill="#2b78e8" stroke="#0c3f9e" stroke-width="2"></path><path d="M13 5H35V21H13Z" fill="#f0f2f5"></path><path d="M14 9H34M14 13H34M14 17H34" stroke="#bbb"></path><path d="M16 26H32V38H16Z" fill="#c8d4e4"></path><path d="M19 29H24V38H19Z" fill="#1550b8"></path>`,
  fit: svg`<path d="M9 18V8H19M27 8H37V18M37 28V38H27M19 38H9V28" fill="none" stroke="#222" stroke-width="6" stroke-dasharray="8.500 2.500"></path><path d="M19 19L27 27M27 19L19 27" stroke="#222" stroke-width="2"></path><rect x="20.500" y="20.500" width="5" height="5" fill="#222"></rect>`,
  eye: svg`<path d="M10 23Q23 6 36 23Q23 37 10 23Z" fill="#e8eef2" stroke="#333" stroke-width="1.800"></path><circle cx="23" cy="22" r="8.500" fill="#5cc0ee" stroke="#1c5f86" stroke-width="1.500"></circle><circle cx="23" cy="22" r="4" fill="#0b2333"></circle><circle cx="25.500" cy="19" r="1.700" fill="#fff"></circle>`,
  brush: svg`<path d="M7 24Q9 19 13 23Q18 27 13 32Q11 38 17 37Q21 36 22 31" fill="none" stroke="#4c1d12" stroke-width="3"></path><path d="M19 28L29 13Q34 6 37 6Q38 16 29 32L21 37Z" fill="#e02a1c"></path><path d="M19 28L27 34L20 37Z" fill="#f4b93c"></path><path d="M24 26L32 14" stroke="#ff9e90" stroke-width="2"></path>`,
  hideTop: svg`<ellipse cx="23" cy="30" rx="13" ry="8" fill="#2e2e2e"></ellipse><path d="M11 33Q23 44 35 33" fill="none" stroke="#b5b5b5" stroke-width="2.500"></path><path d="M11 18L20 6L31 11L34 19L25 25L13 24Z" fill="#e6e6e6"></path><path d="M22 8L31 18" stroke="#999" stroke-width="4"></path>`,
  wireCan: svg`<path d="M8 23L20 8Q35 5 38 19L27 34Q22 41 14 36Q7 32 8 23Z" fill="none" stroke="#3a3a3a" stroke-width="3"></path><path d="M16 23L25 13M17 33L30 19M22 10Q24 22 36 20" stroke="#444" stroke-width="2.500" fill="none"></path>`,
  redCan: svg`<path d="M8 23L20 8Q25 5 35 13Q39 17 37 21L27 34Q22 41 14 36Q7 32 8 23Z" fill="url(#red)" stroke="#3a0808" stroke-width="1.500"></path><path d="M22 9Q24 21 36 21" fill="none" stroke="#600" stroke-width="4"></path><path d="M13 24L21 15" stroke="#ff9b9b" stroke-width="3"></path>`,
  greenCan: svg`<path d="M8 23Q10 17 15 20L30 35Q24 42 15 37Q7 31 8 23Z" fill="#eee" stroke="#777"></path><path d="M16 16L24 7Q36 7 39 19L31 30Z" fill="#6fc424" stroke="#1e5206" stroke-width="1.500"></path><path d="M26 11Q27 21 37 21" stroke="#2c6a0c" stroke-width="4" fill="none"></path><path d="M10 12L34 37" stroke="#222" stroke-width="2.500"></path>`,
  split: svg`<ellipse cx="25" cy="36" rx="14" ry="3" fill="#333" opacity=".5"></ellipse><path d="M23 6A13 14.500 0 0 0 23 35Z" fill="url(#orange)"></path><path d="M23 6A13 14.500 0 0 1 23 35Z" fill="url(#pearl)"></path>`,
  ball: svg`<path d="M13 16L22 12L31 15L35 24L32 33L24 37L15 34L11 25Z" fill="url(#sky)" stroke="#23307e" stroke-width="2" stroke-linejoin="round"></path>`,
};

@customElement("gh-icon")
class GhIcon extends LitElement {
  @property() name = "";
  @property({ type: Number }) size = 48;
  @property() view = "0 0 48 48";
  static styles = css`
    :host { display: block; flex: none; }
    svg { display: block; }
    .gl { font-family: "Liberation Serif", serif; font-weight: 700; fill: #f4f4f4; text-anchor: middle; }
  `;
  render() {
    return html`<svg width=${this.size} height=${this.size} viewBox=${this.view}>
      <defs>
        <linearGradient id="hexFill" x1="0" y1="0" x2="1" y2="1"><stop offset="0" stop-color="#555"></stop><stop offset=".45" stop-color="#222"></stop><stop offset="1" stop-color="#111"></stop></linearGradient>
        <linearGradient id="silver" x1="0" y1="0" x2="0" y2="1"><stop offset="0" stop-color="#b4b4b4"></stop><stop offset=".5" stop-color="#e2e2e2"></stop><stop offset="1" stop-color="#8c8c8c"></stop></linearGradient>
        <linearGradient id="drum" x1="0" y1="0" x2="0" y2="1"><stop offset="0" stop-color="#8a8a8a"></stop><stop offset=".4" stop-color="#cfcfcf"></stop><stop offset="1" stop-color="#6a6a6a"></stop></linearGradient>
        <radialGradient id="pearl" cx=".35" cy=".3"><stop offset="0" stop-color="#fff"></stop><stop offset=".6" stop-color="#d2d2d2"></stop><stop offset="1" stop-color="#8a8a8a"></stop></radialGradient>
        <linearGradient id="gold" x1="0" y1="0" x2="0" y2="1"><stop offset="0" stop-color="#ffbe32"></stop><stop offset="1" stop-color="#ffe66a"></stop></linearGradient>
        <linearGradient id="treeBg" x1="0" y1="0" x2="0" y2="1"><stop offset="0" stop-color="#777"></stop><stop offset="1" stop-color="#f4f4f4"></stop></linearGradient>
        <linearGradient id="pinkTile" x1="0" y1="0" x2="1" y2="1"><stop offset="0" stop-color="#ffd3e6"></stop><stop offset=".3" stop-color="#d45a9c"></stop><stop offset=".6" stop-color="#ff2f9a"></stop><stop offset="1" stop-color="#b020b8"></stop></linearGradient>
        <radialGradient id="red" cx=".35" cy=".35"><stop offset="0" stop-color="#ff6a60"></stop><stop offset=".4" stop-color="#d81414"></stop><stop offset="1" stop-color="#7c0606"></stop></radialGradient>
        <radialGradient id="rose" cx=".4" cy=".3"><stop offset="0" stop-color="#ffc5dc"></stop><stop offset=".5" stop-color="#e05590"></stop><stop offset="1" stop-color="#a81c58"></stop></radialGradient>
        <radialGradient id="orange" cx=".5" cy=".25"><stop offset="0" stop-color="#ffd9a0"></stop><stop offset=".5" stop-color="#ee8224"></stop><stop offset="1" stop-color="#a0300c"></stop></radialGradient>
        <radialGradient id="sky" cx=".4" cy=".3"><stop offset="0" stop-color="#c6edff"></stop><stop offset=".6" stop-color="#6fbdf2"></stop><stop offset="1" stop-color="#3a78cc"></stop></radialGradient>
      </defs>
      ${icons[this.name]}
    </svg>`;
  }
}

const tabs = ["Maths", "Sets", "Vector", "Curve", "Surface", "Mesh", "Intersect", "Transform", "Display", "Squid (ShapeDiver edition)", "ShapeDiver", "Wb", "Bowerbird", "Kangaroo2", "Wasp"];

const panels = [
  { name: "Geometry", sets: [["cross", "vec"], ["circle", "ellipse", "plane", "arc", "line", "rect"], ["box", "mesh", "brep", "surf"]] },
  { name: "Primitive", sets: [["bool", "num", "int", "txt"]] },
  { name: "Input", sets: [["btn", "panel"], ["toggle", "scroller", "knob", "list"], ["graph", "swatch"]] },
  { name: "Util", sets: [["cherry", "tree"], ["arrowDark", "arrowLight"], ["pills", "flask"]] },
];

@customElement("app-root")
class AppRoot extends LitElement {
  static styles = css`
    :host { display: flex; flex-direction: column; width: 2560px; height: 1600px; overflow: hidden; background: #2f2f2f; font-family: "Liberation Sans", Arial, sans-serif; box-sizing: border-box; }
    * { box-sizing: border-box; }
    .tabs { height: 45px; flex: none; display: flex; align-items: flex-start; background: #636363; position: relative; }
    .shape { position: absolute; left: 0; top: 0; }
    .names { position: relative; display: flex; gap: 25.100px; padding-left: 12px; font-size: 23px; line-height: 26px; color: #b8b8b8; white-space: nowrap; }
    .names span { padding-top: 11px; -webkit-text-stroke: .3px #b8b8b8; }
    .names .on { padding-top: 6px; color: #f2f2f2; -webkit-text-stroke: .4px #f2f2f2; }
    .ribbon { height: 153px; flex: none; display: flex; gap: 8px; padding: 5px 6px 0; background: linear-gradient(#818181, #8a8a8a); border-bottom: 2px solid #666; }
    .group { height: 145px; border: 2px solid #b4b4b4; border-radius: 9px; }
    .inner { height: 141px; border: 2px solid #565656; border-radius: 7px; overflow: hidden; display: flex; flex-direction: column; background: linear-gradient(#7d7d7d, #8b8b8b); }
    .sets { display: flex; height: 113px; }
    .set { display: grid; grid-auto-rows: 56px; }
    .c1 { grid-template-columns: 56px; }
    .c2 { grid-template-columns: 56px 56px; }
    .c3 { grid-template-columns: 56px 56px 56px; }
    .set gh-icon { place-self: center; }
    .sep { width: 20px; display: flex; justify-content: center; }
    .sep::before { content: ""; width: 2px; height: 108px; background: linear-gradient(rgba(190,190,190,0), #bcbcbc 50%, rgba(190,190,190,0)); }
    .label { flex: 1; display: flex; align-items: center; background: linear-gradient(#6a6a6a, #757575); color: #2c2c2c; font-size: 20px; line-height: 24px; }
    .label span { flex: 1; text-align: center; }
    .label svg { width: 14px; height: 18px; flex: none; margin: 2px 1px 0 4px; }
    .gap { height: 20px; flex: none; }
    .work { flex: none; height: 1320px; border: 2px solid #646464; display: flex; flex-direction: column; }
    .tools { height: 80px; flex: none; display: flex; align-items: center; padding: 0 24px 3px 6px; background: #2f2f2f; }
    .btn { width: 64px; height: 38px; flex: none; border-radius: 6px; background: #646464; border-top: 1.500px solid #7a7a7a; display: flex; align-items: center; justify-content: center; }
    .btn.sel { background: linear-gradient(#2170e6, #1c61cc); border-top-color: #4a8cf0; }
    .rule { width: 2px; height: 33px; flex: none; background: #444; }
    .m16 { margin-left: 16px; } .m14 { margin-left: 14px; } .m10 { margin-left: 10px; } .m18 { margin-left: 18px; } .m20 { margin-left: 20px; } .m34 { margin-left: 34px; } .m32 { margin-left: 32px; } .m12 { margin-left: 12px; }
    .grow { flex: 1; }
    .zoom { display: flex; height: 38px; width: 95px; flex: none; font: 23px/37px Inter, sans-serif; color: #e6e6e6; background: #3a3a3a; border-radius: 0 6px 6px 0; overflow: hidden; border-bottom: 1px solid #666; }
    .zoom span { width: 61px; padding-left: 8px; letter-spacing: .3px; }
    .zoom i { width: 34px; background: linear-gradient(#2170e6, #1c61cc); display: flex; align-items: center; justify-content: center; height: 38px; }
    .stage { position: relative; flex: none; height: 1236px; background: #cec9c1; }
    .stage svg { display: block; }
    .wire { fill: none; stroke: #000; stroke-opacity: .46; stroke-width: 2.800; }
    .trunk { fill: none; stroke: #000; stroke-opacity: .5; stroke-width: 1; }
    .heavy { stroke-width: 3.400; stroke-opacity: .65; }
    .red { stroke: #ee4433; stroke-opacity: .55; stroke-width: 3.200; }
    .body, .light, .warn, .panel, .cluster { stroke: #3c3c3c; stroke-opacity: .42; stroke-width: 3; }
    .body { fill: #8d8a99; }
    .light { fill: #c9c9c9; }
    .warn { fill: #ff8c28; }
    .panel { fill: #fff562; stroke: #7a6a10; }
    .cluster { fill: #ff127b; stroke: #7a1060; }
    .core { fill: #303131; }
    .head { fill: #8a8896; }
    .spine { fill: #9c0f50; }
    .blue { fill: #2f9ad8; }
    .status { flex: 1; display: flex; align-items: flex-start; padding: 13px 120px 0 10px; color: #e4e4e4; font: 25px/34px Inter, sans-serif; }
    .status svg { flex: none; margin-top: 1px; }
    .msg { margin-left: 6px; letter-spacing: -.42px; white-space: pre; flex: 1; }
    .ver { letter-spacing: -.45px; }
    .compass { position: absolute; left: 2424px; top: 1124px; }
    .handle { position: absolute; left: -2px; top: 1180px; }
  `;

  private bar(name: string, cls = "") {
    return html`<div class="btn ${cls}"><gh-icon name=${name} size="37" view="3 2 40 40"></gh-icon></div>`;
  }

  private stage() {
    return html`<svg width="2556" height="1236" viewBox="2 300 2556 1236">
      <rect x="500.500" y="320.500" width="2100" height="1300" fill="#d5d0c8" stroke="#000"></rect>
      ${groups.map(g => svg`<rect x=${g.x} y=${g.y} width=${g.w} height=${g.h} fill=${g.fill} stroke=${g.edge}></rect>`)}
      ${trunks.map(([a, b, c, d]) => svg`<path class="trunk" d=${curve(a, b, c, d)}></path>`)}
      ${frames.map(f => svg`<g transform=${`translate(${f.ox} ${f.oy}) scale(${f.sx} ${f.sy})`}>${f.rows.split(/[;\n]/).filter(r => r.trim()).map(item)}</g>`)}
    </svg>`;
  }

  render() {
    return html`
      <div class="tabs">
        <svg class="shape" width="2560" height="45">
          <defs><linearGradient id="tab" x1="0" y1="0" x2="0" y2="1"><stop offset="0" stop-color="#969696"></stop><stop offset="1" stop-color="#818181"></stop></linearGradient></defs>
          <path d="M0 43.500H2560" stroke="#505050" stroke-width="1.500"></path>
          <path d="M1 46V10Q1 1.500 10 1.500H92Q103 1.500 104 13V31Q105 44 118 44V46Z" fill="url(#tab)"></path>
          <path d="M1 46V10Q1 1.500 10 1.500H92Q103 1.500 104 13V31Q105 44 118 44" fill="none" stroke="#474747" stroke-width="1.800"></path>
        </svg>
        <div class="names"><span class="on">Params</span>${tabs.map(t => html`<span>${t}</span>`)}</div>
      </div>
      <div class="ribbon">
        ${panels.map(p => html`<div class="group"><div class="inner">
          <div class="sets">${p.sets.map((s, i) => html`${i ? html`<div class="sep"></div>` : ""}
            <div class="set c${s.length / 2}">${s.map(n => html`<gh-icon name=${n}></gh-icon>`)}</div>`)}</div>
          <div class="label"><span>${p.name}</span><svg viewBox="0 0 14 18"><path d="M7 1V10M7 15L3 9.500H11Z" fill="#ccc" stroke="#ccc" stroke-width="2"></path></svg></div>
        </div></div>`)}
      </div>
      <div class="gap"></div>
      <div class="work">
        <div class="tools">
          ${this.bar("folder")}${this.bar("save", "m16")}
          <div class="rule m14"></div>
          <div class="zoom m10"><span>11%</span><i><svg width="18" height="12"><path d="M3 2L9 9L15 2" fill="none" stroke="#fff" stroke-width="2.500"></path></svg></i></div>
          ${this.bar("fit", "m18")}${this.bar("eye", "m34")}${this.bar("brush", "m32")}
          <div class="grow"></div>
          ${this.bar("hideTop")}${this.bar("wireCan", "m14")}${this.bar("redCan", "sel m14")}
          <div class="rule m20"></div>
          ${this.bar("greenCan", "m20")}${this.bar("split", "m12")}
          <div class="rule m10"></div>${this.bar("ball", "m10")}
        </div>
        <div class="stage">
          ${this.stage()}
          <svg class="handle" width="16" height="55"><defs><linearGradient id="hg" x1="0" y1="0" x2="0" y2="1"><stop offset="0" stop-color="#7a7a7a"></stop><stop offset="1" stop-color="#d0d0d0"></stop></linearGradient></defs><rect x="-4" y="1.500" width="18" height="52" rx="2" fill="url(#hg)" stroke="#111" stroke-width="2"></rect></svg>
          <svg class="compass" width="104" height="90" viewBox="2426 1424 104 90">
            <defs><radialGradient id="cg"><stop offset="0" stop-color="#efefef"></stop><stop offset="1" stop-color="#868686"></stop></radialGradient></defs>
            <path d="M2429 1436L2443 1435L2445 1444L2452 1435Q2458 1431 2463 1434L2446 1460L2444 1474Q2439 1474 2438 1467Q2439 1456 2443 1447L2435 1449Z" fill="#000"></path>
            <circle cx="2485" cy="1468.300" r="39.800" fill="#fff" stroke="#222" stroke-width="1.800"></circle>
            <circle cx="2485" cy="1468.300" r="36" fill="url(#cg)"></circle>
            <path d="M2497 1433V1445L2508 1438ZM2450 1455H2461L2455 1445ZM2507 1481H2520L2513 1492ZM2471 1491V1504L2459 1496Z" fill="#fff"></path>
          </svg>
        </div>
      </div>
      <div class="status">
        <svg width="28" height="34" viewBox="0 0 28 34"><ellipse cx="14" cy="15" rx="13" ry="14" fill="#123f78" stroke="#6fb2e6" stroke-width="1.500"></ellipse><ellipse cx="14" cy="15" rx="10.500" ry="11.500" fill="#2d86cf"></ellipse><path d="M9 5H13V17H9ZM15 5H19V17H15Z" fill="#fff"></path><circle cx="11" cy="22" r="2.300" fill="#fff"></circle><circle cx="17" cy="22" r="2.300" fill="#fff"></circle></svg>
        <span class="msg">Solution completed in ~145.1 seconds (100 seconds ago)</span>
        <span class="ver">1.0.0007</span>
      </div>`;
  }
}
